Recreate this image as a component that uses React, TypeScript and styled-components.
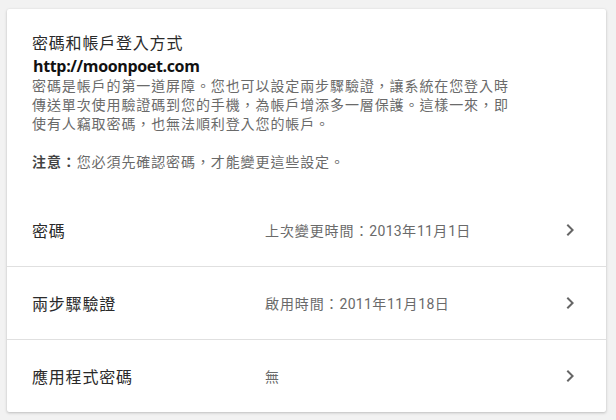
import React from "react";
import styled, { createGlobalStyle } from "styled-components";

const Global = createGlobalStyle`
  html, body { margin: 0; padding: 0; background: #f2f2f2; }
  body { font-family: Roboto, "Noto Sans CJK TC", sans-serif; }
`;

const Page = styled.div`
  padding: 9px 10px 8px 7px;
`;

const Card = styled.div`
  width: 599px;
  background: #fff;
  border-radius: 2px;
  box-shadow: 0 1px 3px rgba(0, 0, 0, 0.22), 0 0 1px rgba(0, 0, 0, 0.08);
`;

const Header = styled.div`
  padding: 24px 25px 21px;
`;

const Title = styled.div`
  font-size: 16px;
  line-height: 22px;
  letter-spacing: 0.8px;
  color: #2a2a2a;
`;

const Url = styled.div`
  font-family: "Open Sans", sans-serif;
  font-weight: 700;
  font-size: 16px;
  letter-spacing: -0.35px;
  line-height: 22px;
  color: #111;
  padding-left: 1px;
`;

const Para = styled.p`
  margin: 0;
  max-width: 486px;
  font-size: 14px;
  line-height: 19px;
  letter-spacing: 0.9px;
  color: #6a6a6a;
  & + & { margin-top: 19px; }
`;

const Strong = styled.b`
  color: #444;
  font-weight: 700;
`;

const Row = styled.div<{ $first?: boolean }>`
  display: grid;
  grid-template-columns: 233px 1fr 24px;
  align-items: center;
  height: 72px;
  padding: 0 24px 0 25px;
  border-top: 1px solid ${(p) => (p.$first ? "transparent" : "#e0e0e0")};
  box-sizing: content-box;
  cursor: pointer;
`;

const Label = styled.div`
  font-size: 16px;
  letter-spacing: 0.8px;
  color: #2a2a2a;
`;

const Value = styled.div`
  font-size: 14px;
  letter-spacing: 0.9px;
  color: #6a6a6a;
`;

const Num = styled.span`
  letter-spacing: 0.3px;
`;

const Chevron = () => (
  <svg width="24" height="24" viewBox="0 0 24 24" style={{ display: "block" }}>
    <path d="M10 6L8.59 7.41 13.17 12l-4.58 4.59L10 18l6-6z" fill="#666" />
  </svg>
);

export default function App() {
  return (
    <>
      <Global />
      <Page>
        <Card>
          <Header>
            <Title>密碼和帳戶登入方式</Title>
            <Url>http://moonpoet.com</Url>
            <Para>
              密碼是帳戶的第一道屏障。您也可以設定兩步驟驗證，讓系統在您登入時傳送單次使用驗證碼到您的手機，為帳戶增添多一層保護。這樣一來，即使有人竊取密碼，也無法順利登入您的帳戶。
            </Para>
            <Para>
              <Strong>注意：</Strong>您必須先確認密碼，才能變更這些設定。
            </Para>
          </Header>
          <Row $first>
            <Label>密碼</Label>
            <Value>
              上次變更時間：<Num>2013</Num>年<Num>11</Num>月<Num>1</Num>日
            </Value>
            <Chevron />
          </Row>
          <Row>
            <Label>兩步驟驗證</Label>
            <Value>
              啟用時間：<Num>2011</Num>年<Num>11</Num>月<Num>18</Num>日
            </Value>
            <Chevron />
          </Row>
          <Row>
            <Label>應用程式密碼</Label>
            <Value>無</Value>
            <Chevron />
          </Row>
        </Card>
      </Page>
    </>
  );
}
